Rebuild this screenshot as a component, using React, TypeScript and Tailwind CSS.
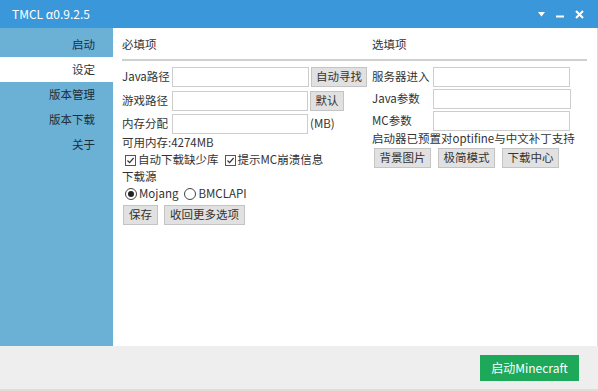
import React from "react";

const FONT = { fontFamily: '"Noto Sans CJK SC", "Noto Sans", sans-serif' };

const NAV = ["启动", "设定", "版本管理", "版本下载", "关于"];

function Btn({ children, w }: { children: React.ReactNode; w: string }) {
  return (
    <button className={`${w} h-[20px] shrink-0 bg-[#e1e1e1] border border-[#c4c4c4] text-[11.5px] text-[#333] leading-none flex items-center justify-center`}>
      {children}
    </button>
  );
}

function Field({ label, labelW, inputW, mb, children }: { label: string; labelW: string; inputW: string; mb: string; children?: React.ReactNode }) {
  return (
    <div className={`flex items-center h-[20px] ${mb}`}>
      <span className={`${labelW} shrink-0 text-[11.5px] text-[#333]`}>{label}</span>
      <input className={`${inputW} h-[20px] border border-[#cdcdcd] bg-white outline-none`} />
      {children}
    </div>
  );
}

function Check({ label }: { label: string }) {
  return (
    <label className="flex items-center gap-[2px]">
      <span className="w-[11px] h-[11px] border border-[#555] flex items-center justify-center">
        <svg width="9" height="9" viewBox="0 0 9 9">
          <path d="M1.5 4.5 L3.6 6.6 L7.6 2" stroke="#333" strokeWidth="1.2" fill="none" />
        </svg>
      </span>
      <span>{label}</span>
    </label>
  );
}

function Radio({ label, on }: { label: string; on?: boolean }) {
  return (
    <label className="flex items-center gap-[2px]">
      <span className="w-[12px] h-[12px] rounded-full border border-[#444] flex items-center justify-center">
        {on && <span className="w-[6px] h-[6px] rounded-full bg-[#222]" />}
      </span>
      <span>{label}</span>
    </label>
  );
}

export default function App() {
  return (
    <div className="w-[598px] h-[391px] flex flex-col bg-white text-[#333] text-[11.5px]" style={FONT}>
      {/* title bar */}
      <div className="h-[28px] shrink-0 bg-[#3a97da] flex items-center pl-[12px] pr-[14px] text-white">
        <span className="text-[12px]">TMCL α0.9.2.5</span>
        <div className="ml-auto flex items-center gap-[11px]">
          <svg width="7" height="5" viewBox="0 0 7 5"><path d="M0 0 H7 L3.5 4.5 Z" fill="#fff" /></svg>
          <svg width="8" height="8" viewBox="0 0 8 8"><rect x="0" y="5.5" width="8" height="2" fill="#fff" /></svg>
          <svg width="9" height="9" viewBox="0 0 9 9"><path d="M1 1 L8 8 M8 1 L1 8" stroke="#fff" strokeWidth="2" /></svg>
        </div>
      </div>

      <div className="flex flex-1 min-h-0">
        {/* sidebar */}
        <div className="w-[113px] shrink-0 bg-[#6bb1d5] pt-[4px]">
          {NAV.map((n, i) => (
            <div
              key={n}
              className={`h-[25px] flex items-center justify-end pr-[18px] text-[11.5px] ${i === 1 ? "bg-white text-[#333]" : "text-[#1f2d38]"}`}
            >
              {n}
            </div>
          ))}
        </div>

        {/* content */}
        <div className="flex-1 pl-[9px] pr-[10px] pt-[9px] border-r border-[#d8d8d8]">
          <div className="flex h-[16px] items-center">
            <span className="w-[250px]">必填项</span>
            <span>选填项</span>
          </div>
          <div className="h-[2px] bg-[#cfcfcf] mt-[6px] mb-[6px]" />

          <div className="flex">
            <div className="w-[250px] shrink-0">
              <Field label="Java路径" labelW="w-[50px]" inputW="w-[137px]" mb="mb-[4px]">
                <span className="ml-[2px]"><Btn w="w-[56px]">自动寻找</Btn></span>
              </Field>
              <Field label="游戏路径" labelW="w-[50px]" inputW="w-[136px]" mb="mb-[3px]">
                <span className="ml-[2px]"><Btn w="w-[34px]">默认</Btn></span>
              </Field>
              <Field label="内存分配" labelW="w-[50px]" inputW="w-[136px]" mb="mb-0">
                <span className="ml-[2px]">(MB)</span>
              </Field>
              <div className="h-[16px] flex items-center mt-[1px]">可用内存:4274MB</div>
              <div className="h-[18px] flex items-center gap-[6px] pl-[3px]">
                <Check label="自动下载缺少库" />
                <Check label="提示MC崩溃信息" />
              </div>
              <div className="h-[16px] flex items-center">下载源</div>
              <div className="h-[18px] flex items-center gap-[6px] pl-[3px]">
                <Radio label="Mojang" on />
                <Radio label="BMCLAPI" />
              </div>
              <div className="flex gap-[6px] mt-[2px] pl-[1px]">
                <Btn w="w-[35px]">保存</Btn>
                <Btn w="w-[81px]">收回更多选项</Btn>
              </div>
            </div>

            <div className="flex-1">
              <Field label="服务器进入" labelW="w-[61px]" inputW="w-[137px]" mb="mb-[2px]" />
              <Field label="Java参数" labelW="w-[61px]" inputW="w-[138px]" mb="mb-[2px]" />
              <Field label="MC参数" labelW="w-[61px]" inputW="w-[137px]" mb="mb-0" />
              <div className="h-[16px] flex items-center">启动器已预置对optifine与中文补丁支持</div>
              <div className="flex gap-[7px] mt-[1px] pl-[2px]">
                <Btn w="w-[57px]">背景图片</Btn>
                <Btn w="w-[57px]">极简模式</Btn>
                <Btn w="w-[57px]">下载中心</Btn>
              </div>
            </div>
          </div>
        </div>
      </div>

      {/* bottom bar */}
      <div className="h-[45px] shrink-0 bg-[#efeeee] border-b-2 border-[#e2dcd6] flex items-center justify-end pr-[19px]">
        <button className="w-[99px] h-[26px] bg-[#1ea95a] text-white text-[12px] flex items-center justify-center">
          启动Minecraft
        </button>
      </div>
    </div>
  );
}
